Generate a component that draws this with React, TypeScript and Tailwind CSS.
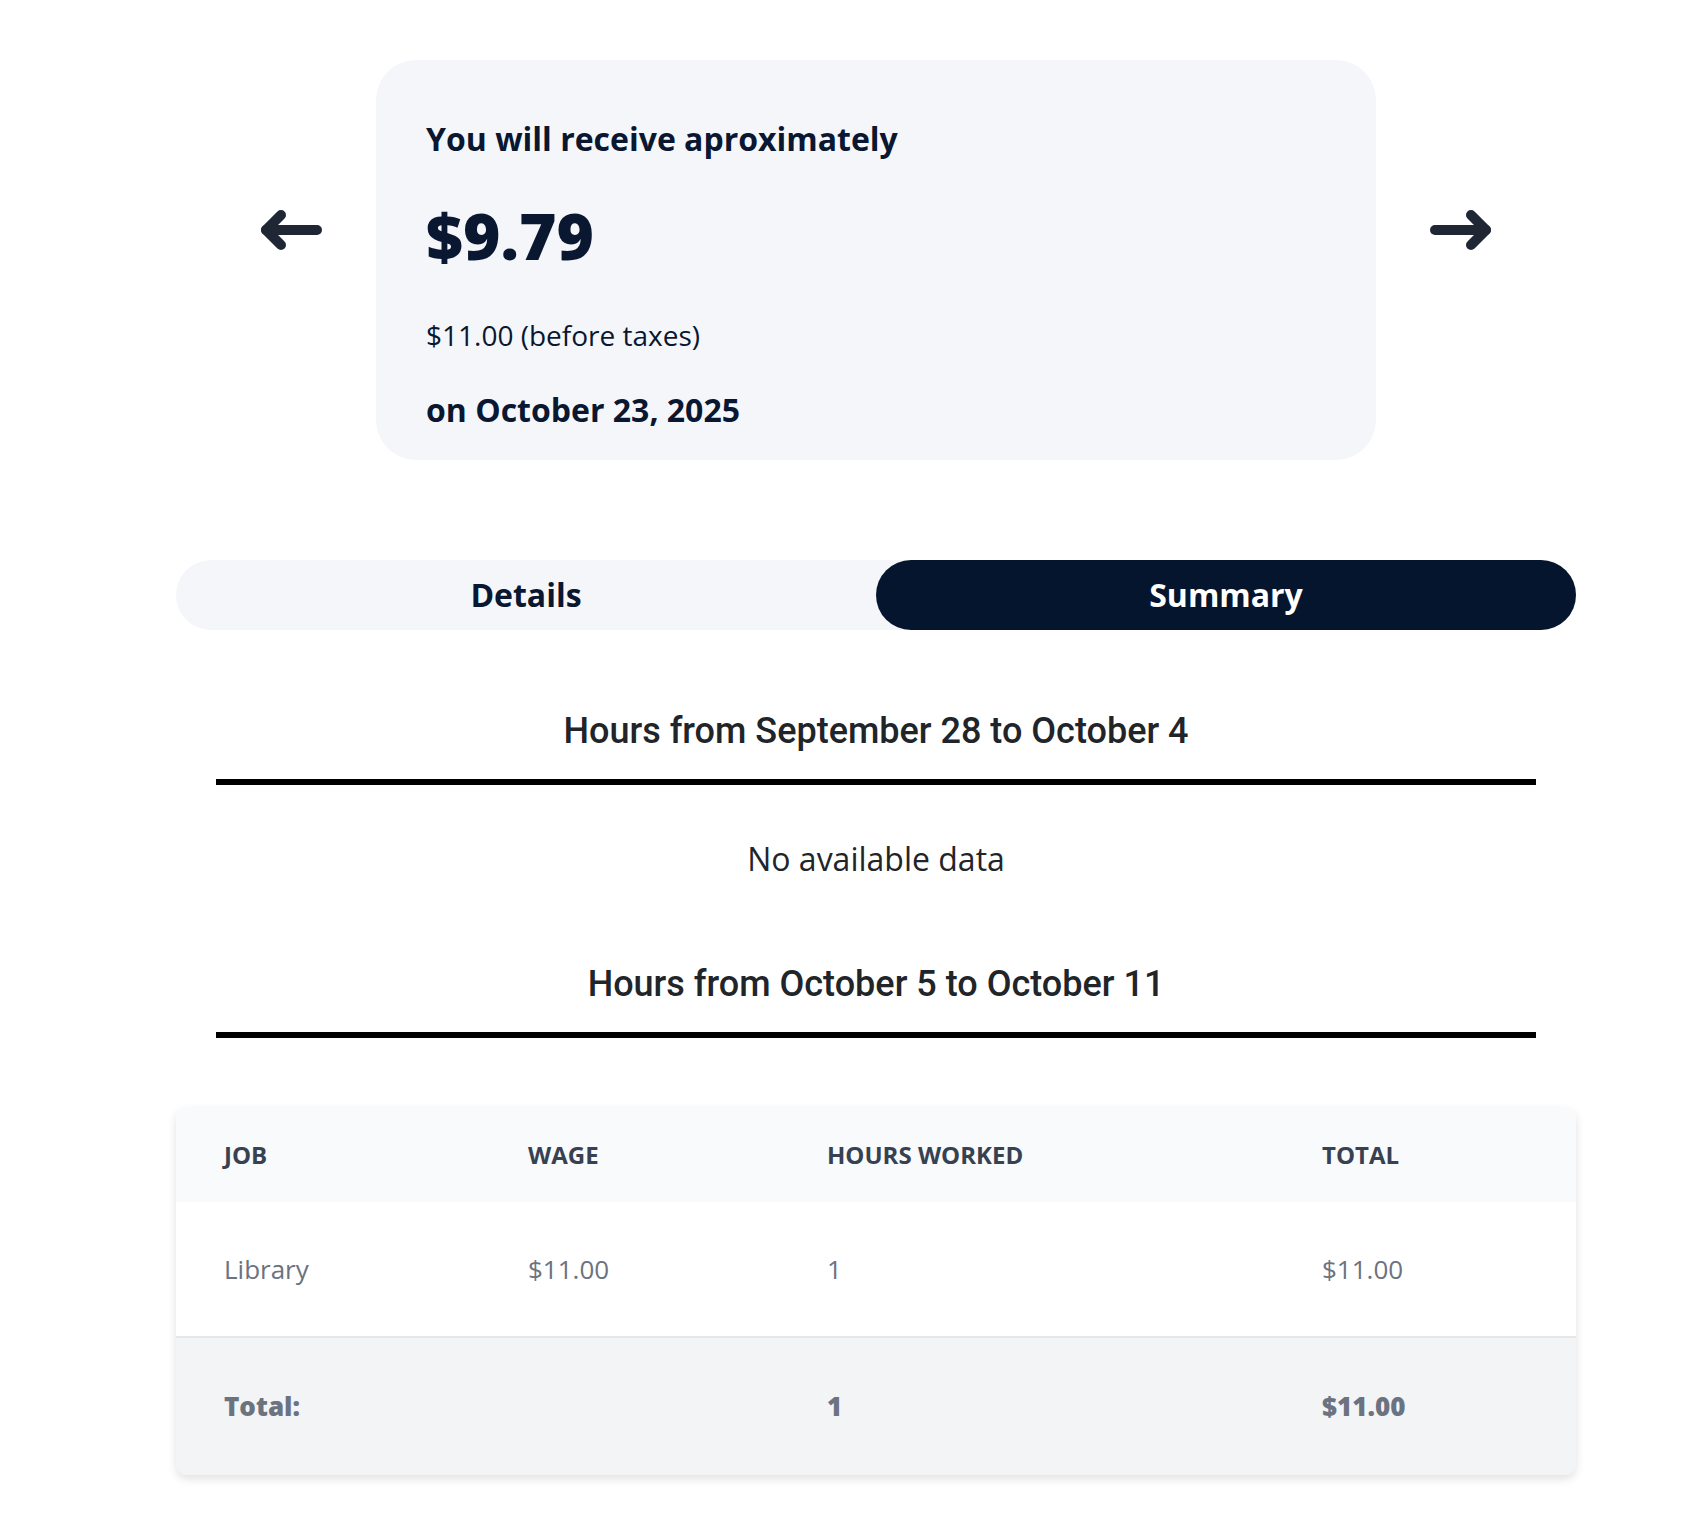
import React from 'react';

const navy = 'text-[#0a1731]';

function Arrow({ dir }: { dir: 'left' | 'right' }) {
  return (
    <svg
      width="61"
      height="40"
      viewBox="0 0 61 40"
      fill="none"
      stroke="#1f2735"
      strokeWidth="10"
      strokeLinecap="round"
      strokeLinejoin="round"
      className={`mt-[150px] shrink-0 ${dir === 'right' ? 'rotate-180' : ''}`}
    >
      <path d="M5 20H56" />
      <path d="M20 5L5 20L20 35" />
    </svg>
  );
}

const cols = 'grid grid-cols-[304px_299px_495px_302px]';

function WeekHeading({ label }: { label: string }) {
  return (
    <div>
      <h3 className="text-center text-[36px] leading-none font-medium text-[#212529] font-['Roboto',sans-serif]">
        {label}
      </h3>
      <div className="mx-[40px] mt-[30px] h-[6px] bg-black" />
    </div>
  );
}

export default function App() {
  return (
    <div className="min-h-screen bg-white font-['Open_Sans',sans-serif] pb-[49px]">
      <div className="ml-[176px] w-[1400px] pt-[60px]">
        {/* payment estimate */}
        <div className="flex items-start justify-center gap-[54px]">
          <Arrow dir="left" />
          <div className={`w-[1000px] rounded-[40px] bg-[#f5f6fa] px-[50px] pt-[63px] pb-[34px] ${navy}`}>
            <p className="text-[32px] leading-none font-bold">You will receive aproximately</p>
            <p className="mt-[49px] text-[64px] leading-none font-extrabold">$9.79</p>
            <p className="mt-[53px] text-[28px] leading-none">$11.00 (before taxes)</p>
            <p className="mt-[45px] text-[32px] leading-none font-bold">on October 23, 2025</p>
          </div>
          <Arrow dir="right" />
        </div>

        {/* tabs */}
        <div className="mt-[100px] flex h-[70px] rounded-full bg-[#f5f6fa] text-[32px] font-bold">
          <button className={`flex-1 ${navy}`}>Details</button>
          <button className="flex-1 rounded-full bg-[#06152e] text-white">Summary</button>
        </div>

        <div className="mt-[83px]">
          <WeekHeading label="Hours from September 28 to October 4" />
          <p className="mt-[58px] text-center text-[32px] leading-none text-[#212529]">No available data</p>
        </div>

        <div className="mt-[91px]">
          <WeekHeading label="Hours from October 5 to October 11" />
        </div>

        {/* week table */}
        <div className="mt-[69px] overflow-hidden rounded-xl bg-white shadow-[0_4px_10px_rgba(0,0,0,0.12)]">
          <div className={`${cols} h-[95px] items-center bg-[#f9fafb] text-[24px] font-bold uppercase text-[#374151]`}>
            <div className="px-12">Job</div>
            <div className="px-12">Wage</div>
            <div className="px-12">Hours worked</div>
            <div className="px-12">Total</div>
          </div>
          <div className={`${cols} h-[136px] items-center border-b-2 border-[#e5e7eb] text-[26px] text-[#6b7280]`}>
            <div className="px-12">Library</div>
            <div className="px-12">$11.00</div>
            <div className="px-12">1</div>
            <div className="px-12">$11.00</div>
          </div>
          <div className={`${cols} h-[137px] items-center bg-[#f3f4f6] text-[26px] font-extrabold text-[#6b7280]`}>
            <div className="px-12">Total:</div>
            <div className="px-12" />
            <div className="px-12">1</div>
            <div className="px-12">$11.00</div>
          </div>
        </div>
      </div>
    </div>
  );
}
